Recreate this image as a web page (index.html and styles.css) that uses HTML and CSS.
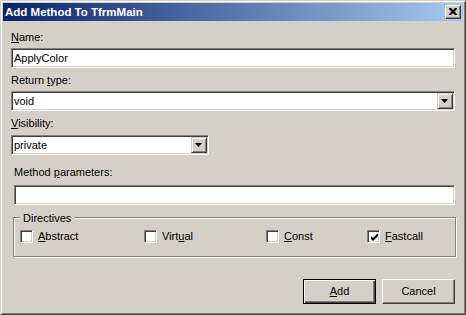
FILE: index.html
```html
<!DOCTYPE html>
<html>
<head>
<meta charset="utf-8">
<link rel="stylesheet" href="styles.css">
</head>
<body>
<div class="window">
  <div class="titlebar">
    <span class="title">Add Method To TfrmMain</span>
    <span class="close">
      <svg width="8" height="7" viewBox="0 0 8 7"><path d="M0 0h2l2 2 2-2h2v1l-2.5 2.5L8 6v1H6L4 5 2 7H0V6l2.5-2.5L0 1z" fill="#000"/></svg>
    </span>
  </div>
  <div class="content">
    <div class="lbl l-name"><u>N</u>ame:</div>
    <div class="edit">ApplyColor</div>
    <div class="lbl l-ret">Return <u>t</u>ype:</div>
    <div class="combo">
      <span class="val">void</span>
      <span class="dd"><svg width="7" height="4" viewBox="0 0 7 4"><path d="M0 0h7L3.5 4z" fill="#000"/></svg></span>
    </div>
    <div class="lbl l-vis"><u>V</u>isibility:</div>
    <div class="combo narrow">
      <span class="val">private</span>
      <span class="dd"><svg width="7" height="4" viewBox="0 0 7 4"><path d="M0 0h7L3.5 4z" fill="#000"/></svg></span>
    </div>
    <div class="lbl l-par">Method <u>p</u>arameters:</div>
    <div class="edit params"></div>
    <div class="group">
      <div class="legend">Directives</div>
      <div class="checks">
        <div class="chk c1"><span class="box"></span><span><u>A</u>bstract</span></div>
        <div class="chk c2"><span class="box"></span><span>Virt<u>u</u>al</span></div>
        <div class="chk c3"><span class="box"></span><span><u>C</u>onst</span></div>
        <div class="chk c4"><span class="box"><svg width="7" height="7" viewBox="0 0 7 7"><path d="M0 2l2 2 5-5v3L2 7 0 5z" fill="#000"/></svg></span><span><u>F</u>astcall</span></div>
      </div>
    </div>
    <div class="buttons">
      <div class="btn default"><span><u>A</u>dd</span></div>
      <div class="btn">Cancel</div>
    </div>
  </div>
</div>
</body>
</html>
```

FILE: styles.css
```css
html, body {
  margin: 0;
  padding: 0;
  background: #d4d0c8;
}
body {
  font-family: "Liberation Sans", Arial, sans-serif;
  font-size: 11px;
  color: #000;
}
u { text-decoration: underline; text-underline-offset: 1px; }

.window {
  width: 466px;
  height: 315px;
  box-sizing: border-box;
  background: #d4d0c8;
  border: 1px solid;
  border-color: #d4d0c8 #404040 #404040 #d4d0c8;
  box-shadow: inset 1px 1px 0 #fff, inset -1px -1px 0 #808080;
  padding: 2px;
  display: flex;
  flex-direction: column;
}

.titlebar {
  height: 18px;
  background: linear-gradient(to right, #0a246a, #a6caf0);
  display: flex;
  align-items: center;
  justify-content: space-between;
  padding: 0 2px 0 2px;
}
.title {
  color: #fff;
  font-weight: bold;
  font-size: 11.5px;
  line-height: 18px;
}
.close {
  width: 16px;
  height: 14px;
  box-sizing: border-box;
  background: #d4d0c8;
  border: 1px solid;
  border-color: #fff #404040 #404040 #fff;
  box-shadow: inset -1px -1px 0 #808080;
  display: flex;
  align-items: center;
  justify-content: center;
  padding: 0 1px 1px 0;
}
.close svg { display: block; }

.content {
  padding: 10px 8px 0 8px;
  display: flex;
  flex-direction: column;
}

.lbl {
  height: 13px;
  line-height: 13px;
  margin-bottom: 4px;
}
.l-ret { margin-top: 6px; }
.l-vis { margin-top: 6px; margin-bottom: 5px; }
.l-par { margin-top: 11px; margin-bottom: 6px; margin-left: 3px; }

.edit, .combo {
  height: 20px;
  box-sizing: border-box;
  background: #fff;
  border: 1px solid;
  border-color: #808080 #fff #fff #808080;
  box-shadow: inset 1px 1px 0 #404040, inset -1px -1px 0 #d4d0c8;
  line-height: 16px;
  padding: 1px 3px 0 2px;
}
.edit.params { margin-left: 3px; }

.combo {
  display: flex;
  align-items: stretch;
  padding: 1px 1px 1px 2px;
}
.combo .val { flex: 1; line-height: 17px; }
.combo.narrow { width: 198px; }
.dd {
  width: 16px;
  box-sizing: border-box;
  background: #d4d0c8;
  border: 1px solid;
  border-color: #d4d0c8 #404040 #404040 #d4d0c8;
  box-shadow: inset 1px 1px 0 #fff, inset -1px -1px 0 #808080;
  display: flex;
  align-items: center;
  justify-content: center;
  padding: 0 1px 0 0;
}
.dd svg { display: block; }

.group {
  margin: 12px -1px 0 2px;
  height: 40px;
  box-sizing: border-box;
  border: 1px solid #808080;
  box-shadow: inset 1px 1px 0 #fff, 1px 1px 0 #fff;
  padding: 0 0 0 6px;
  display: flex;
  flex-direction: column;
  align-items: flex-start;
}
.legend {
  height: 13px;
  line-height: 13px;
  margin-top: -6px;
  padding: 0 3px;
  background: #d4d0c8;
}
.checks {
  display: flex;
  align-self: stretch;
  margin-top: 5px;
  height: 13px;
}
.chk {
  display: flex;
  align-items: center;
  gap: 5px;
  line-height: 13px;
}
.c1 { width: 124px; }
.c2 { width: 122px; }
.c3 { width: 101px; }
.box {
  width: 13px;
  height: 13px;
  box-sizing: border-box;
  background: #fff;
  border: 1px solid;
  border-color: #808080 #fff #fff #808080;
  box-shadow: inset 1px 1px 0 #404040, inset -1px -1px 0 #d4d0c8;
  display: flex;
  align-items: center;
  justify-content: center;
  padding: 1px 0 0 1px;
}
.box svg { display: block; }

.buttons {
  display: flex;
  justify-content: flex-end;
  gap: 6px;
  margin-top: 22px;
}
.btn {
  width: 73px;
  height: 25px;
  box-sizing: border-box;
  border: 1px solid;
  border-color: #fff #404040 #404040 #fff;
  box-shadow: inset -1px -1px 0 #808080;
  display: flex;
  align-items: center;
  justify-content: center;
  padding-bottom: 1px;
}
.btn.default {
  border: 1px solid #000;
  box-shadow: inset 1px 1px 0 #fff, inset -1px -1px 0 #404040, inset -2px -2px 0 #808080;
}
```
